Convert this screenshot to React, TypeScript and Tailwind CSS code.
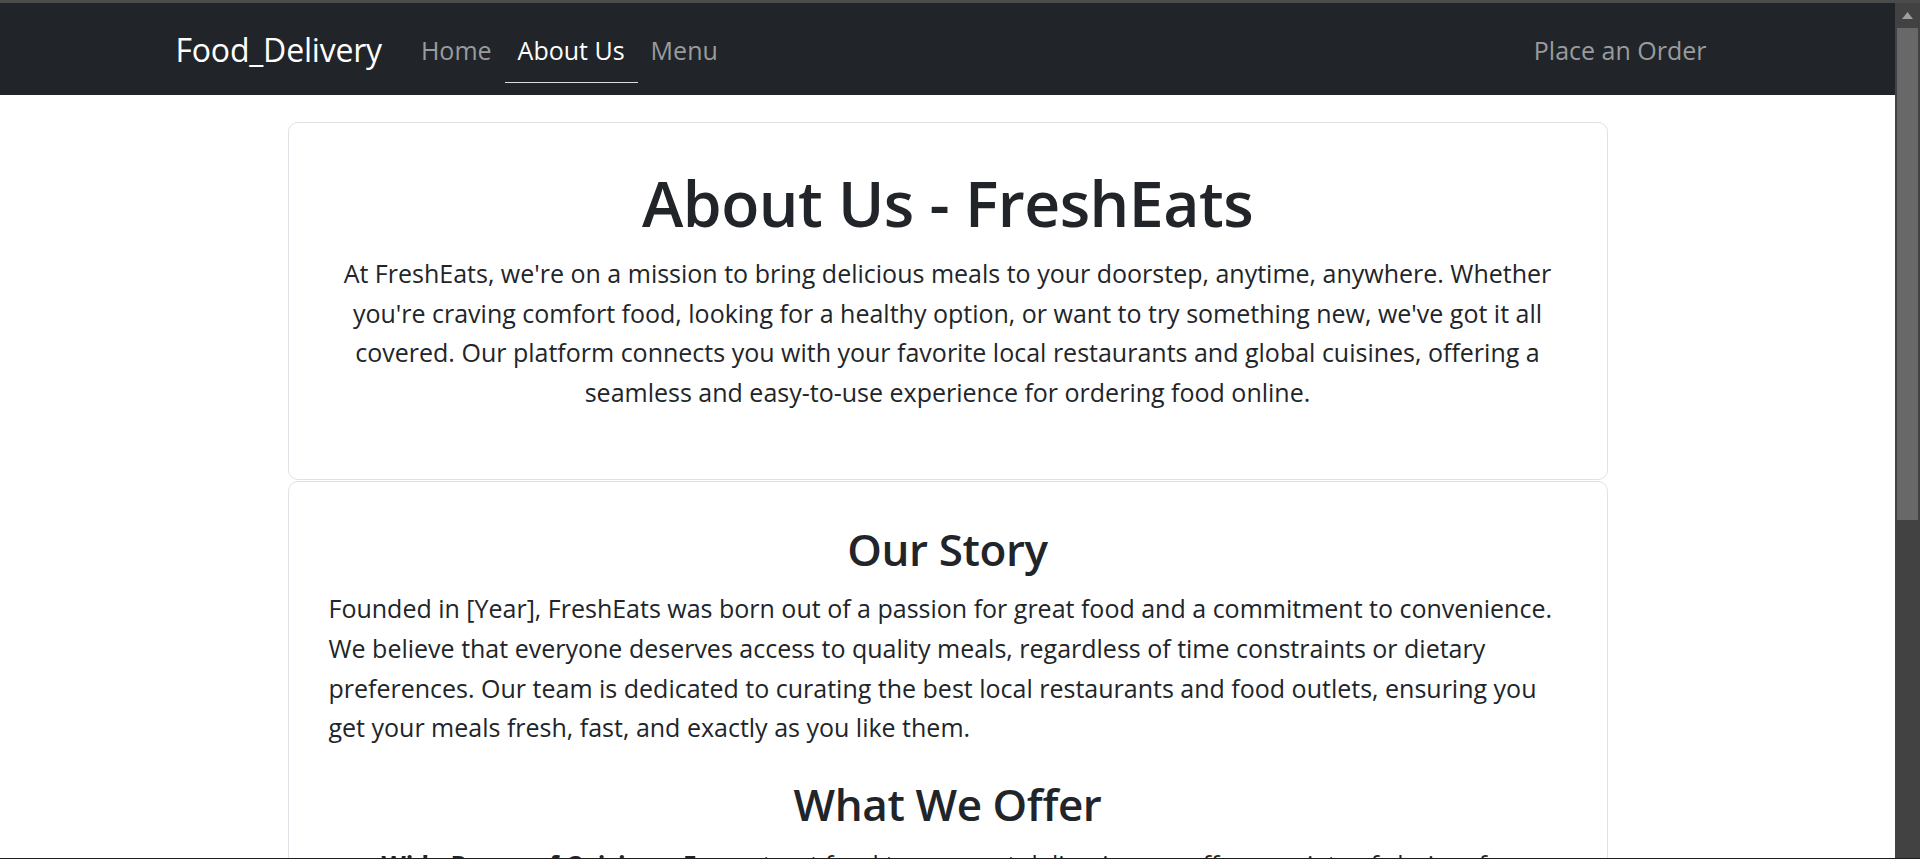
import React from "react";

const font = "font-['Open_Sans',sans-serif]";

function NavLink({ label, active }: { label: string; active?: boolean }) {
  return (
    <a
      href="#"
      className={
        active
          ? "px-[13px] pt-[14px] pb-[12px] leading-[40px] text-white border-b border-[#dcdcdc]"
          : "px-[13px] pt-[14px] pb-[12px] leading-[40px] text-[#999b9d] border-b border-transparent"
      }
    >
      {label}
    </a>
  );
}

export default function App() {
  return (
    <div className={`${font} w-[1920px] h-[859px] overflow-hidden flex flex-col bg-[#424242]`}>
      <div className="h-[3px] bg-[#4b4b4b]" />
      <div className="flex flex-1 min-h-0">
        <div className="flex-1 min-w-0 bg-white flex flex-col overflow-hidden">
          <nav className="h-[92px] shrink-0 bg-[#212529]">
            <div className="w-[1584px] mx-auto px-[20px] h-full flex items-center">
              <a href="#" className="text-[32px] leading-[44px] text-white mr-[26px] tracking-[-0.2px] mt-[2px]">
                Food_Delivery
              </a>
              <div className="flex items-center text-[25px]">
                <NavLink label="Home" />
                <NavLink label="About Us" active />
                <NavLink label="Menu" />
              </div>
              <div className="ml-auto flex items-center text-[25px]">
                <NavLink label="Place an Order" />
              </div>
            </div>
          </nav>

          <main className="flex-1 min-h-0 text-[#212529]">
            <div className="w-[1320px] mx-auto mt-[27px] flex flex-col gap-[1px]">
              <section className="border border-[#dee2e6] rounded-[10px] pt-[42px] pb-[67px] px-[40px] text-center">
                <h1 className="text-[62.5px] leading-[76px] font-semibold mb-[13px] tracking-[-0.5px]">
                  About Us - FreshEats
                </h1>
                <p className="text-[25px] leading-[39.6px] whitespace-nowrap">
                  At FreshEats, we're on a mission to bring delicious meals to your doorstep, anytime, anywhere. Whether
                  <br />
                  you're craving comfort food, looking for a healthy option, or want to try something new, we've got it all
                  <br />
                  covered. Our platform connects you with your favorite local restaurants and global cuisines, offering a
                  <br />
                  seamless and easy-to-use experience for ordering food online.
                </p>
              </section>

              <section className="border border-[#dee2e6] rounded-[10px] pt-[40px] px-[40px] pb-[40px]">
                <h2 className="text-[44px] leading-[54px] font-semibold text-center mb-[13px] tracking-[-0.4px]">
                  Our Story
                </h2>
                <p className="text-[25px] leading-[39.6px] whitespace-nowrap mb-[29px]">
                  Founded in [Year], FreshEats was born out of a passion for great food and a commitment to convenience.
                  <br />
                  We believe that everyone deserves access to quality meals, regardless of time constraints or dietary
                  <br />
                  preferences. Our team is dedicated to curating the best local restaurants and food outlets, ensuring you
                  <br />
                  get your meals fresh, fast, and exactly as you like them.
                </p>
                <h2 className="text-[44px] leading-[54px] font-semibold text-center mb-[14px] tracking-[-0.4px]">
                  What We Offer
                </h2>
                <ul className="list-disc pl-[53px] text-[25px] leading-[39.6px]">
                  <li>
                    <strong className="font-bold">Wide Range of Cuisines:</strong> From street food to gourmet delicacies, we offer a variety of choices for every taste.
                  </li>
                  <li>
                    <strong className="font-bold">Fast Delivery:</strong> Get your food delivered hot and fresh in no time.
                  </li>
                </ul>
              </section>
            </div>
          </main>
        </div>

        <div className="w-[25px] shrink-0 bg-[#424242] flex flex-col items-center">
          <div className="h-[25px] w-full flex items-center justify-center">
            <svg width="11" height="7" viewBox="0 0 11 7">
              <polygon points="5.5,0 11,7 0,7" fill="#9e9e9e" />
            </svg>
          </div>
          <div className="w-[21px] h-[492px] bg-[#686868]" />
        </div>
      </div>
      <div className="h-[1px] bg-[#1e1e1e]" />
    </div>
  );
}
